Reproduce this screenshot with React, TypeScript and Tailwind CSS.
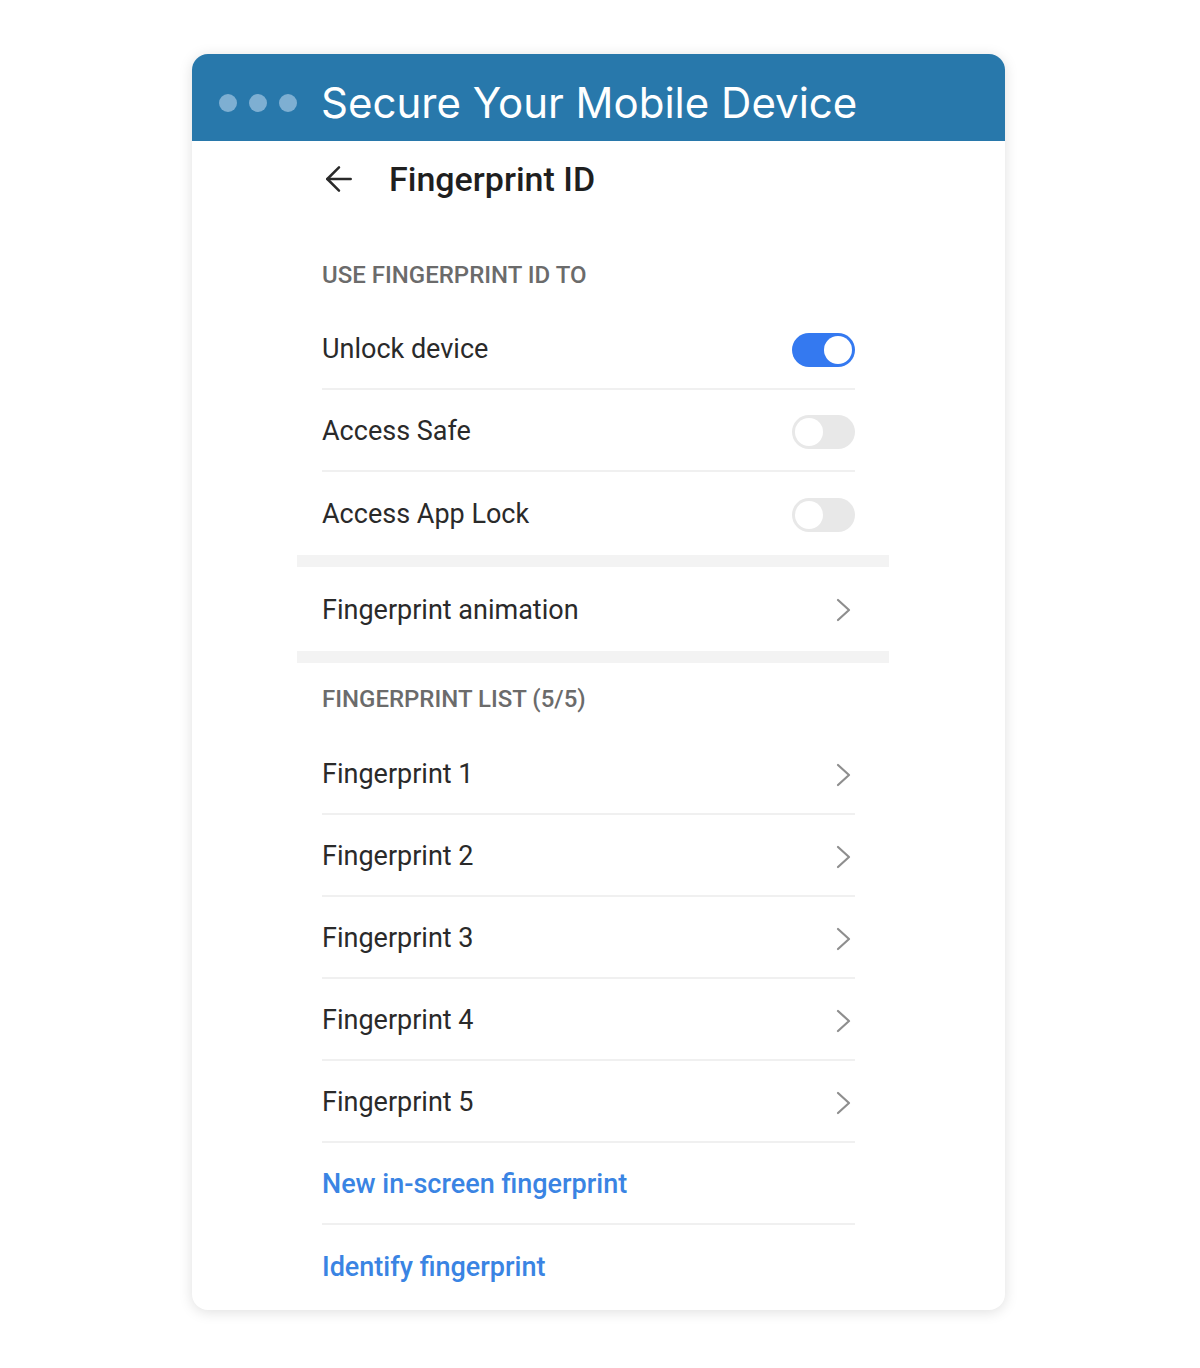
import { ArrowLeft } from 'lucide-react';

const phoneFont = { fontFamily: 'Roboto, "Liberation Sans", sans-serif' };

function Toggle({ on }: { on: boolean }) {
  return on ? (
    <div className="w-[63px] h-[34px] rounded-full bg-[#3479f0] flex items-center justify-end pr-[3px]">
      <div className="w-[28px] h-[28px] rounded-full bg-white" />
    </div>
  ) : (
    <div className="w-[63px] h-[34px] rounded-full bg-[#e8e8e8] flex items-center pl-[3px]">
      <div className="w-[28px] h-[28px] rounded-full bg-white" />
    </div>
  );
}

function Row({ label, right, divider = true, link = false }: { label: string; right?: React.ReactNode; divider?: boolean; link?: boolean }) {
  return (
    <div className={`h-[82px] flex items-center justify-between pt-[3px] ${divider ? 'border-b-2 border-[#f0f0f0]' : ''}`}>
      <span className={link ? 'text-[27px] font-medium text-[#3a84e3]' : 'text-[27px] text-[#2a2a2a]'}>{label}</span>
      {right}
    </div>
  );
}

const Chevron = () => (
  <svg width="16" height="24" viewBox="0 0 16 24" className="mr-[3px]">
    <polyline points="2,2 13,12 2,22" fill="none" stroke="#8e8e8e" strokeWidth="2.2" strokeLinecap="round" strokeLinejoin="round" />
  </svg>
);

export default function App() {
  return (
    <div className="min-h-[1368px] bg-white pt-[54px]">
      <div className="ml-[192px] w-[813px] h-[1256px] rounded-[16px] bg-white overflow-hidden shadow-[0_2px_14px_rgba(0,0,0,0.13)]">
        <div className="h-[87px] bg-[#2878ab] flex items-center pt-[10px]">
          <div className="flex items-center gap-[12px] ml-[27px]">
            <span className="w-[18px] h-[18px] rounded-full bg-[#7eafd2]" />
            <span className="w-[18px] h-[18px] rounded-full bg-[#7eafd2]" />
            <span className="w-[18px] h-[18px] rounded-full bg-[#7eafd2]" />
          </div>
          <h1 className="ml-[24px] text-white text-[42px] leading-none" style={{ fontFamily: 'Inter, "Liberation Sans", sans-serif' }}>
            Secure Your Mobile Device
          </h1>
        </div>

        <div className="ml-[105px] w-[592px]" style={phoneFont}>
          <div className="pl-[25px] pr-[34px]">
            <div className="h-[76px] flex items-center">
              <ArrowLeft className="w-[40px] h-[40px] text-[#2a2a2a] ml-[-3px]" strokeWidth={1.5} />
              <span className="ml-[30px] text-[34px] font-medium text-[#1f1f1f]">Fingerprint ID</span>
            </div>
            <div className="h-[91px] flex items-center pt-[25px]">
              <span className="text-[24px] font-medium text-[#6b6b6b]">USE FINGERPRINT ID TO</span>
            </div>
            <Row label="Unlock device" right={<Toggle on />} />
            <Row label="Access Safe" right={<Toggle on={false} />} />
            <Row label="Access App Lock" right={<Toggle on={false} />} divider={false} />
          </div>
          <div className="h-[12px] bg-[#f3f3f3] mt-[1px]" />
          <div className="pl-[25px] pr-[34px]">
            <div className="h-[84px] flex items-center justify-between pt-[2px]">
              <span className="text-[27px] text-[#2a2a2a]">Fingerprint animation</span>
              <Chevron />
            </div>
          </div>
          <div className="h-[12px] bg-[#f3f3f3]" />
          <div className="pl-[25px] pr-[34px]">
            <div className="h-[70px] flex items-center pt-[2px]">
              <span className="text-[24px] font-medium text-[#6b6b6b]">FINGERPRINT LIST (5/5)</span>
            </div>
            {[1, 2, 3, 4, 5].map((n) => (
              <Row key={n} label={`Fingerprint ${n}`} right={<Chevron />} />
            ))}
            <Row label="New in-screen fingerprint" link />
            <Row label="Identify fingerprint" link divider={false} />
          </div>
        </div>
      </div>
    </div>
  );
}
